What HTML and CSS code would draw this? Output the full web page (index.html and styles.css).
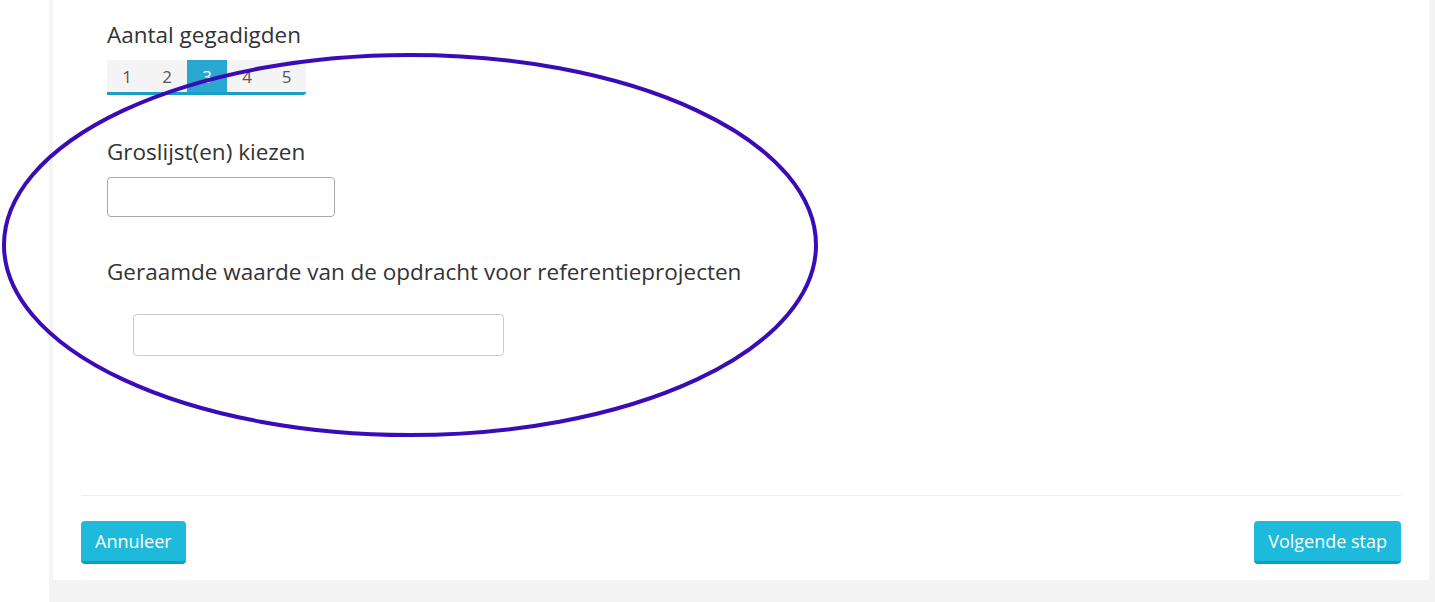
FILE: index.html
```html
<!DOCTYPE html>
<html lang="nl">
<head>
    <meta charset="UTF-8">
    <meta name="viewport" content="width=device-width, initial-scale=1.0">
    <title>Nieuwe opdracht</title>
    <link rel="stylesheet" href="styles.css">
</head>
<body>

    <div class="page">
        <div class="card">
            <div class="form">

                <div class="field">
                    <label class="field-label">Aantal gegadigden</label>
                    <div class="segments">
                        <span class="segment">1</span>
                        <span class="segment">2</span>
                        <span class="segment active">3</span>
                        <span class="segment">4</span>
                        <span class="segment">5</span>
                    </div>
                </div>

                <div class="field field-lists">
                    <label class="field-label" for="lists">Groslijst(en) kiezen</label>
                    <input type="text" id="lists" class="input input-short">
                </div>

                <div class="field field-value">
                    <label class="field-label" for="value">Geraamde waarde van de opdracht voor referentieprojecten</label>
                    <input type="text" id="value" class="input input-long">
                </div>

            </div>

            <div class="footer">
                <button class="btn">Annuleer</button>
                <button class="btn">Volgende stap</button>
            </div>
        </div>
    </div>

    <!-- annotation drawn over the form -->
    <svg class="annotation" width="830" height="450" viewBox="0 0 830 450">
        <ellipse cx="410" cy="245" rx="406" ry="190" fill="none" stroke="#3b0bb7" stroke-width="4"/>
    </svg>

</body>
</html>
```

FILE: styles.css
```css
body {
    margin: 0;
    background-color: #ffffff;
    font-family: "Open Sans", Arial, sans-serif;
    color: #333333;
}
.page {
    margin-left: 49px;
    background-color: #f4f4f4;
    padding: 0 6px 22px 4px;
}
.card {
    background-color: #ffffff;
    padding: 0 28px 16px 28px;
}
.form {
    padding: 20px 0 0 26px;
    height: 495px;
    box-sizing: border-box;
}
.field-label {
    display: block;
    font-size: 22.5px;
    line-height: 30px;
    margin-bottom: 10px;
}
.segments {
    display: inline-flex;
    border-bottom: 3px solid #189fc6;
    border-bottom-right-radius: 3px;
}
.segment {
    width: 40px;
    height: 32px;
    line-height: 33px;
    text-align: center;
    font-size: 17px;
    color: #555555;
    background-color: #f4f4f4;
}
.segment:last-child {
    width: 39px;
}
.segment.active {
    background-color: #28a8d0;
    color: #ffffff;
}
.field-lists {
    margin-top: 42px;
}
.field-value {
    margin-top: 40px;
}
.field-value .field-label {
    margin-bottom: 27px;
}
.input {
    display: block;
    box-sizing: border-box;
    height: 40px;
    border: 1px solid #aaaaaa;
    border-radius: 4px;
    background: #ffffff;
    margin: 0;
}
.input-short {
    width: 228px;
}
.input-long {
    width: 371px;
    height: 42px;
    margin-left: 26px;
    border-color: #cccccc;
}
.footer {
    display: flex;
    justify-content: space-between;
    align-items: flex-start;
    border-top: 1px solid #ececec;
    padding-top: 25px;
}
.btn {
    font-family: "Open Sans", Arial, sans-serif;
    font-size: 18px;
    color: #ffffff;
    background-color: #1dbadc;
    border: none;
    border-bottom: 3px solid #0aa0c0;
    border-radius: 4px;
    height: 43px;
    padding: 0 14px;
    cursor: pointer;
}
.annotation {
    position: absolute;
    left: 0;
    top: 0;
}
```
